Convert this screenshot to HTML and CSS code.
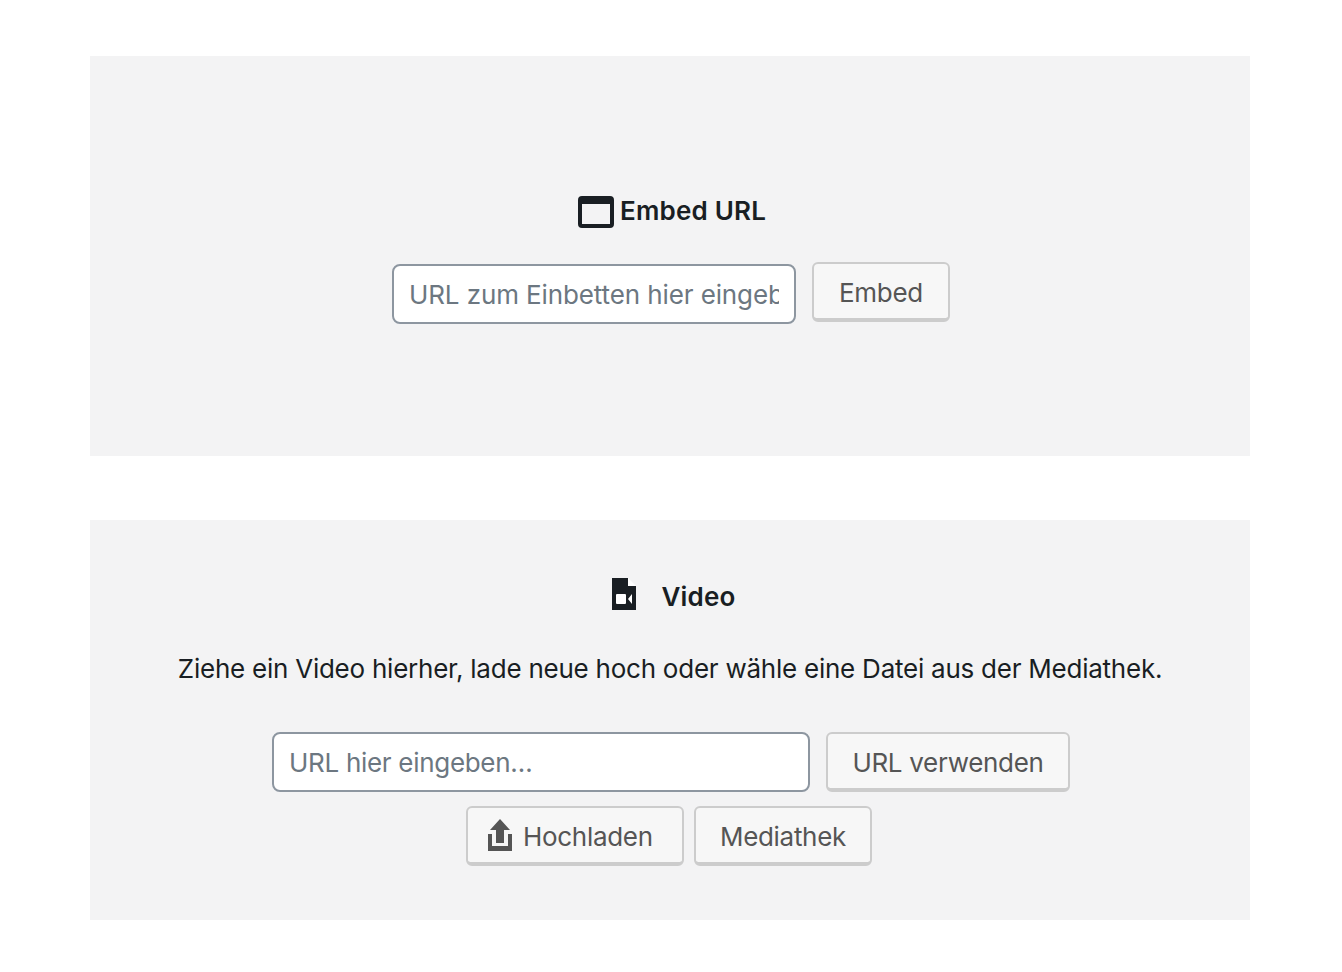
FILE: index.html
```html
<!DOCTYPE html>
<html lang="de">
<head>
    <meta charset="UTF-8">
    <meta name="viewport" content="width=device-width, initial-scale=1.0">
    <title>Embed und Video</title>
    <link rel="stylesheet" href="styles.css">
</head>
<body>
    <div class="container">
        <div class="placeholder placeholder-embed">
            <div class="placeholder-label label-embed">
                <svg class="icon-embed" width="36" height="32" viewBox="0 0 36 32"><path fill="#191e23" fill-rule="evenodd" d="M4 0h28a4 4 0 0 1 4 4v24a4 4 0 0 1-4 4H4a4 4 0 0 1-4-4V4a4 4 0 0 1 4-4zM4 8v20h28V8z"/></svg>
                <span class="label-text">Embed URL</span>
            </div>
            <form class="placeholder-form">
                <input type="text" class="url-input input-embed" placeholder="URL zum Einbetten hier eingeben…">
                <button type="button" class="wp-button button-embed">Embed</button>
            </form>
        </div>

        <div class="placeholder placeholder-video">
            <div class="placeholder-label label-video">
                <svg class="icon-video" width="24" height="32" viewBox="0 0 24 32">
                    <path fill="#191e23" d="M0 0h16v8h8v24H0z"/>
                    <path fill="#fff" d="M16 0l8 8h-8zM5 16h8a1 1 0 0 1 1 1v8a1 1 0 0 1-1 1H5a1 1 0 0 1-1-1v-8a1 1 0 0 1 1-1zM16 21l4-5v10z"/>
                </svg>
                <span class="label-text">Video</span>
            </div>
            <p class="instructions">Ziehe ein Video hierher, lade neue hoch oder wähle eine Datei aus der Mediathek.</p>
            <form class="placeholder-form form-video">
                <input type="text" class="url-input input-video" placeholder="URL hier eingeben…">
                <button type="button" class="wp-button button-url">URL verwenden</button>
            </form>
            <div class="media-buttons">
                <button type="button" class="wp-button button-upload">
                    <svg class="icon-upload" width="24" height="32" viewBox="0 0 24 32"><path fill="#555" d="M12 0l10 11h-6v13H8V11H2zM0 15h4v12h16V15h4v17H0z"/></svg>
                    Hochladen
                </button>
                <button type="button" class="wp-button button-library">Mediathek</button>
            </div>
        </div>
    </div>
</body>
</html>
```

FILE: styles.css
```css
* {
    margin: 0;
    padding: 0;
    box-sizing: border-box;
}

body {
    font-family: "Inter", "Liberation Sans", sans-serif;
    font-size: 26px;
    letter-spacing: -0.24px;
    color: #191e23;
    background-color: #fff;
}

.container {
    width: 1160px;
    margin-left: 90px;
    padding-top: 56px;
    display: flex;
    flex-direction: column;
    gap: 64px;
}

.placeholder {
    height: 400px;
    background-color: #f3f3f4;
    display: flex;
    flex-direction: column;
    align-items: center;
}

.placeholder-embed {
    padding-top: 140px;
}

.placeholder-video {
    padding-top: 58px;
}

.placeholder-label {
    display: flex;
    align-items: center;
    height: 32px;
    font-weight: 600;
    line-height: 32px;
    letter-spacing: 0.2px;
}

.label-embed {
    gap: 6px;
    margin-left: 4px;
}

.label-embed .label-text {
    padding-bottom: 2px;
}

.label-video {
    gap: 25px;
    margin-left: 8px;
}

.label-video .label-text {
    padding-top: 6px;
}

.icon-embed,
.icon-video,
.icon-upload {
    flex-shrink: 0;
}

.placeholder-form {
    display: flex;
    align-items: flex-start;
    gap: 16px;
    margin-top: 34px;
    margin-left: 2px;
}

.url-input {
    height: 60px;
    margin-top: 2px;
    padding: 1px 15px 0;
    background-color: #fff;
    border: 2px solid #8d96a0;
    border-radius: 8px;
    font-family: inherit;
    font-size: 26px;
    color: #191e23;
}

.url-input::placeholder {
    color: #6c7781;
    opacity: 1;
}

.input-embed {
    width: 404px;
    letter-spacing: -0.11px;
}

.input-video {
    width: 538px;
    margin-top: 0;
    letter-spacing: -0.3px;
}

.wp-button {
    height: 60px;
    padding-top: 2px;
    background-color: #f7f7f7;
    border: 2px solid #ccc;
    border-bottom-width: 4px;
    border-radius: 6px;
    font-family: inherit;
    font-size: 26px;
    letter-spacing: -0.3px;
    color: #555;
    cursor: pointer;
}

.button-embed {
    width: 138px;
}

.button-url {
    width: 244px;
}

.instructions {
    margin-top: 42px;
    line-height: 34px;
    white-space: nowrap;
}

.form-video {
    margin-top: 46px;
}

.media-buttons {
    display: flex;
    gap: 10px;
    margin-top: 14px;
    margin-right: 2px;
}

.button-upload {
    width: 218px;
    padding-left: 20px;
    display: flex;
    align-items: center;
    gap: 11px;
}

.icon-upload {
    margin-top: -2px;
}

.button-library {
    width: 178px;
}
```
